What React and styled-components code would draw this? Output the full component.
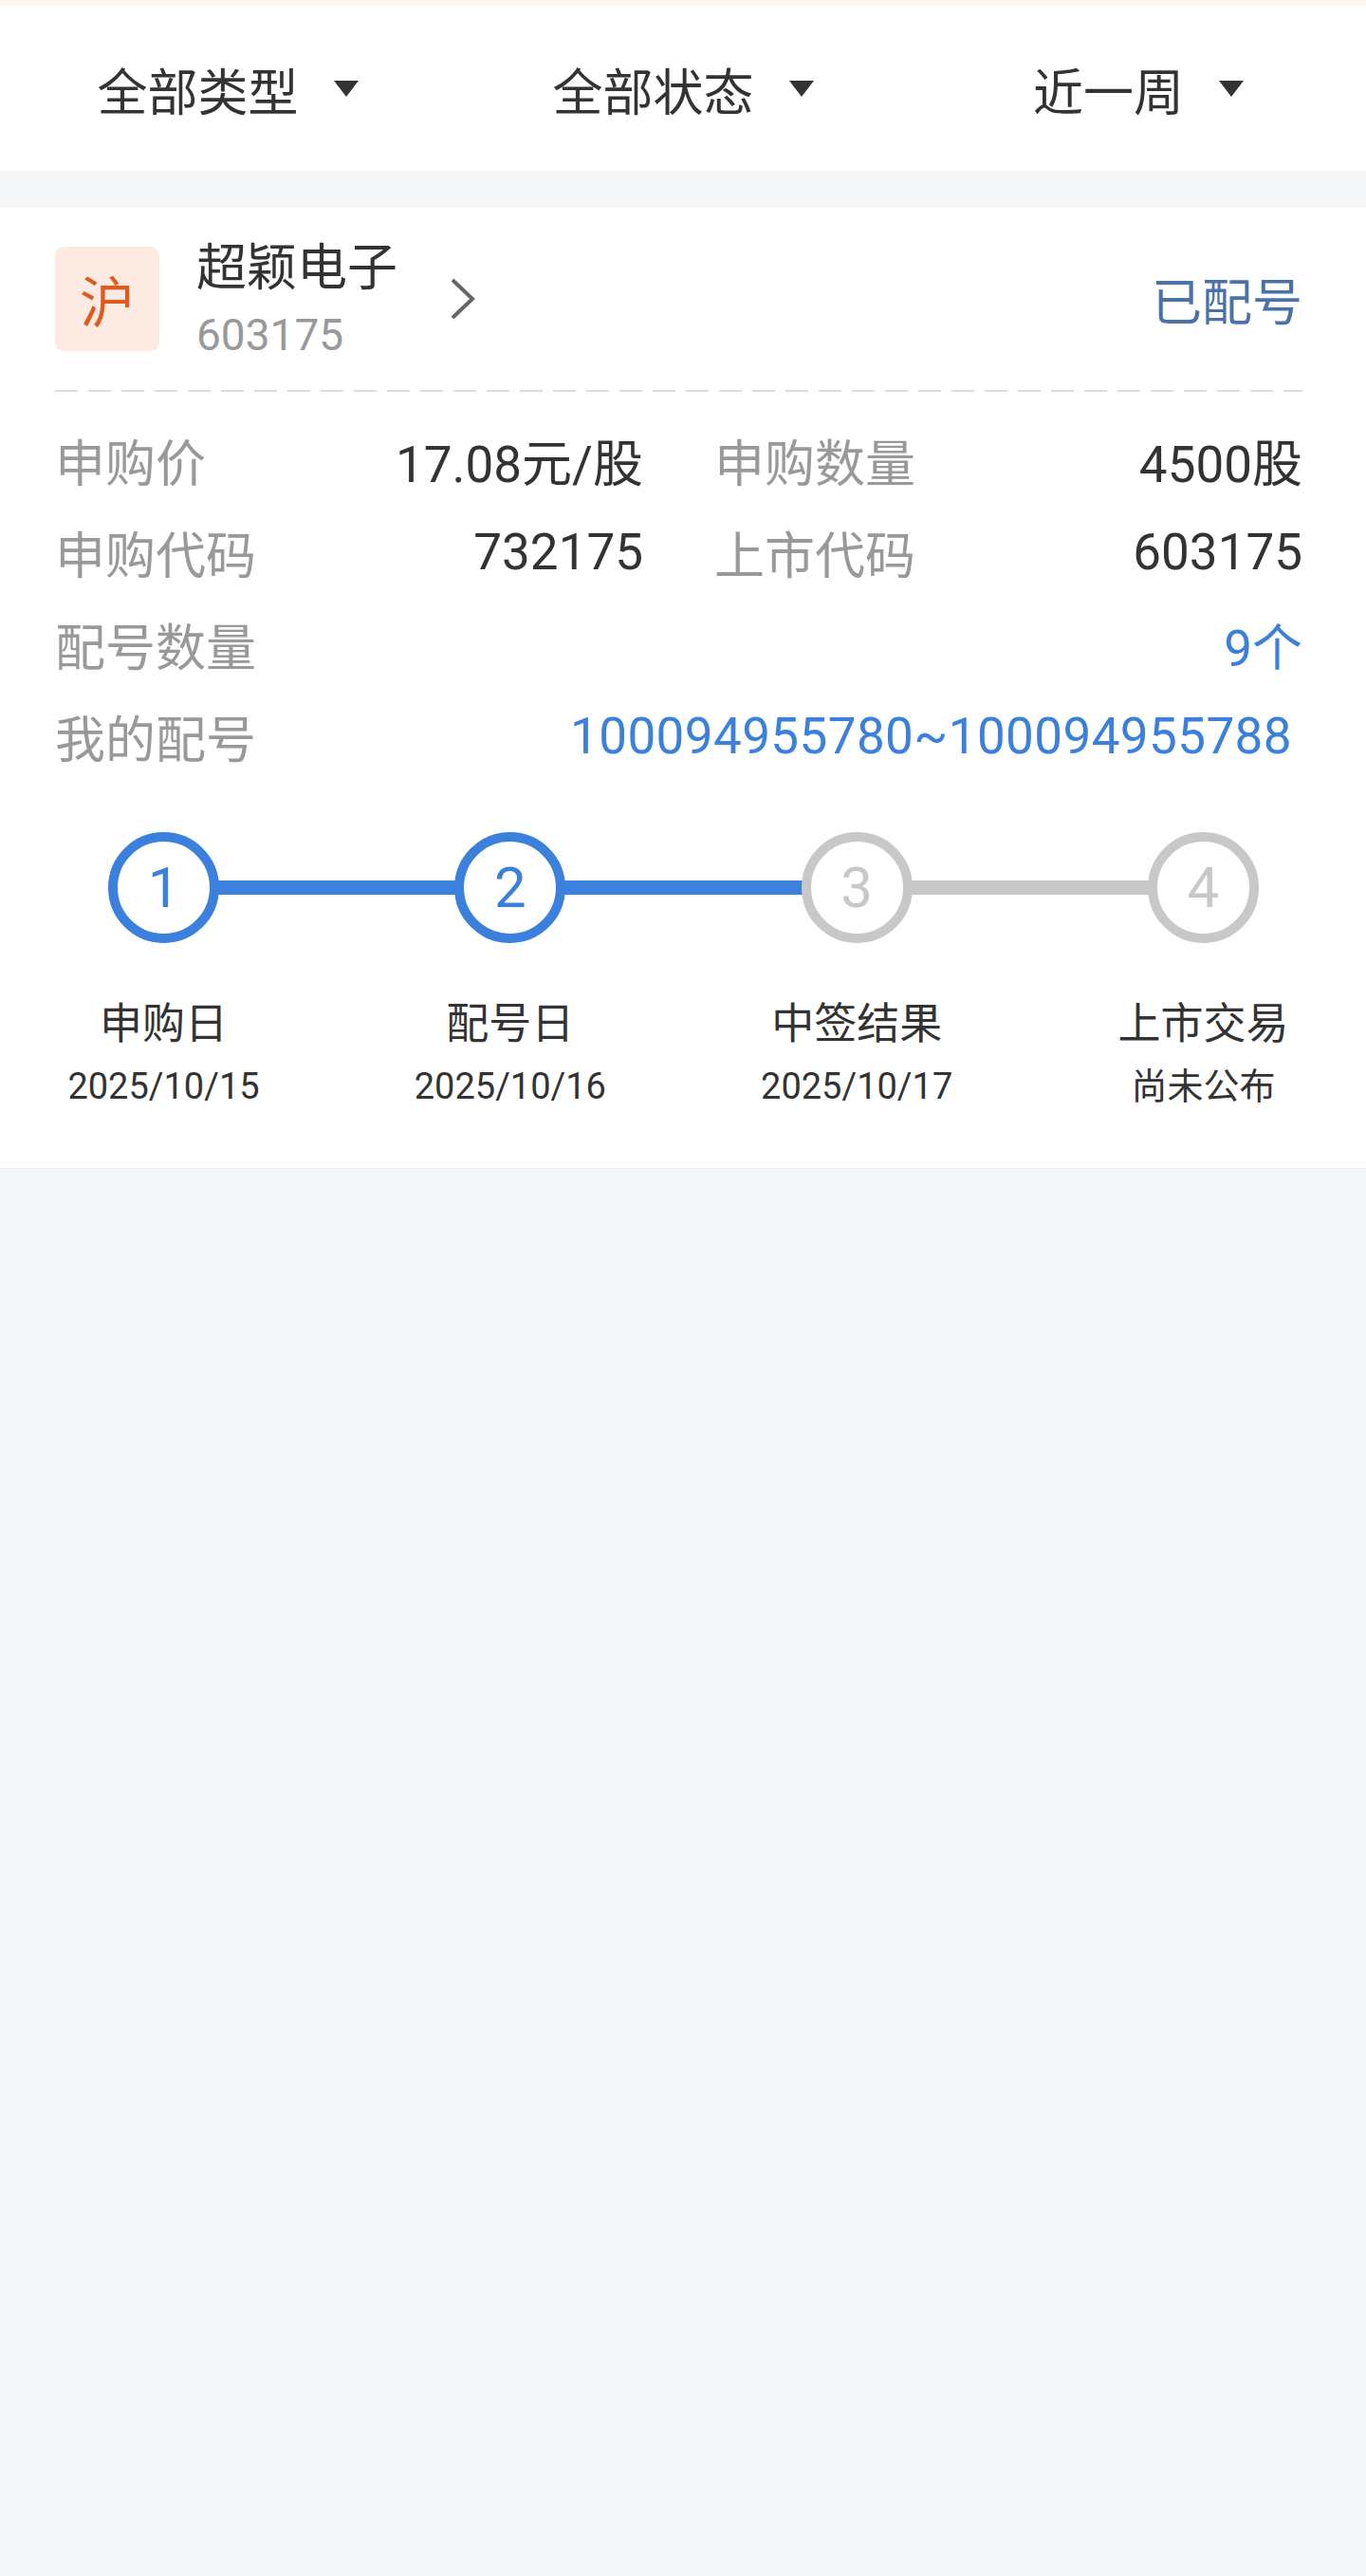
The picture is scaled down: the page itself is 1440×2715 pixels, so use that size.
import React from "react";
import styled, { createGlobalStyle } from "styled-components";

const GlobalStyle = createGlobalStyle`
  html, body {
    margin: 0;
    padding: 0;
    background: #f5f6f8;
  }
  body {
    font-family: Roboto, "Noto Sans CJK SC", sans-serif;
    color: #333;
    min-height: 100vh;
  }
`;

const blue = "#3a80dc";
const grey = "#c8c8c8";

const TopStrip = styled.div`
  height: 7px;
  background: #fff4f1;
`;

const FilterBar = styled.div`
  display: grid;
  grid-template-columns: repeat(3, 1fr);
  height: 173px;
  background: #fff;
`;

const FilterItem = styled.div`
  display: flex;
  align-items: center;
  justify-content: center;
  font-size: 53px;
  color: #333;
`;

const Caret = styled.span`
  width: 0;
  height: 0;
  margin-left: 37px;
  border-left: 13px solid transparent;
  border-right: 13px solid transparent;
  border-top: 17px solid #333;
`;

const Card = styled.div`
  margin-top: 39px;
  background: #fff;
  padding: 30px 67px 61px 58px;
  border-bottom: 1px solid #ececec;
`;

const Header = styled.div`
  display: flex;
  align-items: center;
  height: 132px;
`;

const Market = styled.div`
  display: flex;
  align-items: center;
  justify-content: center;
  width: 110px;
  height: 110px;
  border-radius: 9px;
  background: #fdebe3;
  color: #e05a1e;
  font-size: 58px;
`;

const NameBlock = styled.div`
  display: flex;
  flex-direction: column;
  margin-left: 39px;
  padding-top: 4px;
`;

const Name = styled.div`
  font-size: 53px;
  line-height: 60px;
  color: #333;
`;

const Code = styled.div`
  margin-top: 12px;
  font-size: 46px;
  line-height: 56px;
  color: #999;
`;

const Chevron = styled.svg`
  margin-left: 56px;
  width: 26px;
  height: 44px;
`;

const Status = styled.div`
  margin-left: auto;
  font-size: 53px;
  color: #4a72a8;
`;

const Dashed = styled.div`
  margin-top: 30px;
  height: 2px;
  background-image: linear-gradient(to right, #dcdcdc 24px, transparent 24px);
  background-size: 35px 2px;
  background-repeat: repeat-x;
`;

const InfoGrid = styled.div`
  margin-top: 23px;
  display: grid;
  grid-template-columns: 1fr 1fr;
  column-gap: 75px;
`;

const Row = styled.div`
  display: flex;
  justify-content: space-between;
  align-items: center;
  height: 97px;
  font-size: 53px;
  grid-column: ${(p) => (p.$wide ? "1 / -1" : "auto")};
`;

const Label = styled.span`
  color: #999;
`;

const Value = styled.span`
  color: ${(p) => (p.$accent ? blue : "#333")};
  padding-right: ${(p) => p.$inset || 0}px;
  letter-spacing: ${(p) => p.$spread || 0}px;
`;

const Steps = styled.div`
  display: flex;
  align-items: flex-start;
  margin: 53px 46px 0 56px;
`;

const Step = styled.div`
  display: flex;
  flex-direction: column;
  align-items: center;
  width: 117px;
  flex: none;
`;

const Node = styled.div`
  box-sizing: border-box;
  display: flex;
  align-items: center;
  justify-content: center;
  width: 117px;
  height: 117px;
  border-radius: 50%;
  border: 10px solid ${(p) => (p.$done ? blue : grey)};
  color: ${(p) => (p.$done ? blue : grey)};
  font-size: 60px;
  background: #fff;
`;

const Connector = styled.div`
  flex: 1;
  height: 15px;
  margin: 51px -2px 0;
  background: ${(p) => (p.$done ? blue : grey)};
`;

const StepTitle = styled.div`
  margin-top: 56px;
  font-size: 45px;
  line-height: 60px;
  white-space: nowrap;
  color: #333;
`;

const StepDate = styled.div`
  margin-top: 10px;
  font-size: 38px;
  line-height: 50px;
  white-space: nowrap;
  color: #333;
`;

const steps = [
  { title: "申购日", date: "2025/10/15", done: true },
  { title: "配号日", date: "2025/10/16", done: true },
  { title: "中签结果", date: "2025/10/17", done: false },
  { title: "上市交易", date: "尚未公布", done: false },
];

export default function App() {
  return (
    <>
      <GlobalStyle />
      <TopStrip />
      <FilterBar>
        <FilterItem>全部类型<Caret /></FilterItem>
        <FilterItem>全部状态<Caret /></FilterItem>
        <FilterItem>近一周<Caret /></FilterItem>
      </FilterBar>

      <Card>
        <Header>
          <Market>沪</Market>
          <NameBlock>
            <Name>超颖电子</Name>
            <Code>603175</Code>
          </NameBlock>
          <Chevron viewBox="0 0 26 44">
            <path d="M2 2 L23 22 L2 42" fill="none" stroke="#666" strokeWidth="4" />
          </Chevron>
          <Status>已配号</Status>
        </Header>

        <Dashed />

        <InfoGrid>
          <Row>
            <Label>申购价</Label>
            <Value>17.08元/股</Value>
          </Row>
          <Row>
            <Label>申购数量</Label>
            <Value>4500股</Value>
          </Row>
          <Row>
            <Label>申购代码</Label>
            <Value>732175</Value>
          </Row>
          <Row>
            <Label>上市代码</Label>
            <Value>603175</Value>
          </Row>
          <Row $wide>
            <Label>配号数量</Label>
            <Value $accent>9个</Value>
          </Row>
          <Row $wide>
            <Label>我的配号</Label>
            <Value $accent $inset={11} $spread={0.4}>100094955780~100094955788</Value>
          </Row>
        </InfoGrid>

        <Steps>
          {steps.map((s, i) => (
            <React.Fragment key={s.title}>
              {i > 0 && <Connector $done={i < 3} />}
              <Step>
                <Node $done={s.done}>{i + 1}</Node>
                <StepTitle>{s.title}</StepTitle>
                <StepDate>{s.date}</StepDate>
              </Step>
            </React.Fragment>
          ))}
        </Steps>
      </Card>
    </>
  );
}
